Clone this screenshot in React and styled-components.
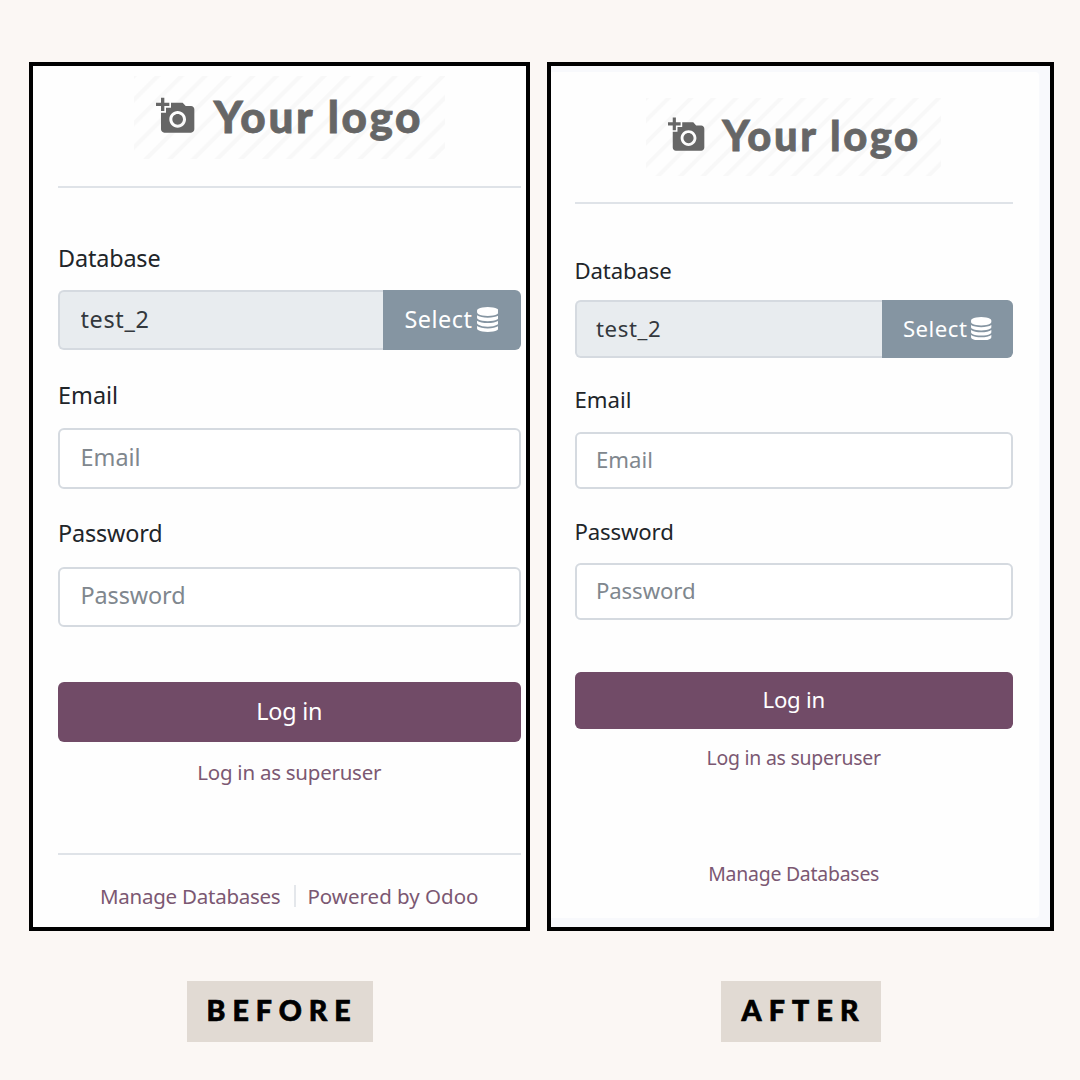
import React from "react";
import styled, { createGlobalStyle, css } from "styled-components";
import { MdAddAPhoto } from "react-icons/md";

const GlobalStyle = createGlobalStyle`
  * { box-sizing: border-box; }
  body { margin: 0; background: #fbf7f4; }
`;

/* every length in a login form is a multiple of the form's own unit */
const u = (n) => `calc(var(--u) * ${n})`;

const Board = styled.main`
  width: 1080px;
  height: 1080px;
  padding: 62px 26px 0 29px;
  display: flex;
  gap: 17px;
  align-items: flex-start;
  background: #fbf7f4;
  font-family: "Noto Sans", "Open Sans", sans-serif;
  overflow: hidden;
`;

const Figure = styled.figure`
  margin: 0;
  width: ${(p) => p.$width}px;
  display: flex;
  flex-direction: column;
  align-items: center;
`;

const Frame = styled.div`
  width: 100%;
  height: 869px;
  border: 4px solid #000;
  background: ${(p) => (p.$tinted ? "#f8f9fc" : "#fefefe")};
  padding: ${(p) => (p.$tinted ? "6px 11px 9px 0" : "0")};
`;

const Caption = styled.figcaption`
  margin-top: 50px;
  width: ${(p) => p.$width}px;
  height: 61px;
  padding-left: ${(p) => p.$inset}px;
  background: #e1dad3;
  color: #000;
  font: 900 28.5px/59px Lato, sans-serif;
  letter-spacing: ${(p) => p.$tracking}px;
  -webkit-text-stroke: 0.7px #000;
  white-space: nowrap;
`;

const Card = styled.div`
  --u: ${(p) => p.$unit}px;
  height: 100%;
  background: #fefefe;
  border-radius: 0 4px 4px 0;
  padding: ${(p) => p.$padding};
`;

const Form = styled.form`
  width: ${u(462.5)};
  display: flex;
  flex-direction: column;
`;

const Logo = styled.div`
  align-self: center;
  width: ${u(311)};
  height: ${u(83)};
  padding: 0 0 0 ${u(22.5)};
  display: flex;
  align-items: center;
  color: #666;
  background: repeating-linear-gradient(
    135deg,
    #f8f8f8 0,
    #f8f8f8 ${u(1.4)},
    #fefefe ${u(2.8)},
    #fefefe ${u(14)},
    #f8f8f8 ${u(15.4)},
    #f8f8f8 ${u(16.8)}
  );
  svg {
    width: ${u(40)};
    height: ${u(40)};
    flex: none;
    margin-bottom: ${u(3.5)};
  }
`;

const LogoText = styled.span`
  margin: 0 0 ${u(4)} ${u(17.5)};
  font: 900 ${u(44)} / ${u(60)} Lato, sans-serif;
  white-space: nowrap;
  letter-spacing: ${u(2.7)};
  -webkit-text-stroke: ${u(0.8)} #666;
`;

const Rule = styled.hr`
  width: 100%;
  height: 2px;
  margin: ${(p) => u(p.$top)} 0 0;
  border: 0;
  background: #dfe3e8;
`;

const Field = styled.div`
  margin-top: ${(p) => u(p.$top)};
  display: flex;
  flex-direction: column;
  gap: ${(p) => u(p.$gap)};
`;

const Label = styled.label`
  color: #212529;
  font-size: ${u(23.4)};
  line-height: ${u(30)};
  letter-spacing: ${(p) => u(p.$tracking || 0)};
`;

const Group = styled.div`
  display: flex;
  height: ${u(60.3)};
`;

const boxText = css`
  font-family: inherit;
  font-size: ${u(23.4)};
  letter-spacing: ${(p) => u(p.$tracking || 0)};
`;

const Input = styled.input`
  ${boxText}
  flex: 1;
  min-width: 0;
  height: ${u(60.3)};
  padding: 0 ${u(20.5)} ${u(3)};
  border: 2px solid #d5dae0;
  border-radius: ${(p) => (p.$joined ? `${u(6)} 0 0 ${u(6)}` : u(6))};
  border-right-width: ${(p) => (p.$joined ? 0 : 2)}px;
  background: ${(p) => (p.$joined ? "#e8ecef" : "#fff")};
  color: #33383d;
  outline: none;
  &::placeholder { color: #80878e; opacity: 1; }
`;

const SelectButton = styled.button`
  ${boxText}
  width: ${u(138)};
  padding: 0 0 ${u(3)} ${u(22)};
  border: 0;
  border-radius: 0 ${u(6)} ${u(6)} 0;
  background: #8595a2;
  color: #fff;
  display: flex;
  align-items: center;
  svg {
    width: ${u(21.5)};
    height: ${u(25)};
    margin: ${u(2)} 0 0 auto;
    margin-right: ${u(22.5)};
  }
`;

const Submit = styled.button`
  ${boxText}
  margin-top: ${u(55.3)};
  height: ${u(60.3)};
  padding: 0 0 ${u(3)};
  border: 0;
  border-radius: ${u(6)};
  background: #714b67;
  color: #fff;
`;

const Link = styled.a`
  color: #7b5872;
  font-size: ${u(20.5)};
  line-height: ${u(30)};
  letter-spacing: ${(p) => u(p.$tracking || 0)};
  white-space: nowrap;
`;

const Centered = styled.div`
  margin-top: ${(p) => u(p.$top)};
  display: flex;
  justify-content: center;
  align-items: center;
`;

const Divider = styled.span`
  width: 2px;
  height: ${u(22)};
  margin: 0 ${u(11)} 0 ${u(14)};
  background: #e4e7eb;
`;

const DatabaseIcon = () => (
  <svg viewBox="0 0 1536 1792" fill="currentColor" aria-hidden="true">
    <path d="M768 768q237 0 443-43t325-127v170q0 69-103 128t-280 93.500-385 34.500-385-34.500-280-93.500-103-128v-170q119 84 325 127t443 43zM768 1536q237 0 443-43t325-127v170q0 69-103 128t-280 93.500-385 34.500-385-34.500-280-93.500-103-128v-170q119 84 325 127t443 43zM768 1152q237 0 443-43t325-127v170q0 69-103 128t-280 93.500-385 34.500-385-34.500-280-93.500-103-128v-170q119 84 325 127t443 43zM768 0q208 0 385 34.500t280 93.500 103 128v128q0 69-103 128t-280 93.500-385 34.500-385-34.500-280-93.500-103-128v-128q0-69 103-128t280-93.500 385-34.500z" />
  </svg>
);

function LoginForm({ branded }) {
  return (
    <Form>
      <Logo>
        <MdAddAPhoto />
        <LogoText>Your logo</LogoText>
      </Logo>
      <Rule $top={27.4} />
      <Field $top={54.8} $gap={16.8}>
        <Label $tracking={-0.15}>Database</Label>
        <Group>
          <Input $joined $tracking={0.65} readOnly value="test_2" />
          <SelectButton $tracking={0.5} type="button">
            Select
            <DatabaseIcon />
          </SelectButton>
        </Group>
      </Field>
      <Field $top={29.4} $gap={18.6}>
        <Label>Email</Label>
        <Group>
          <Input placeholder="Email" />
        </Group>
      </Field>
      <Field $top={29.4} $gap={18.6}>
        <Label $tracking={-0.15}>Password</Label>
        <Group>
          <Input $tracking={-0.1} placeholder="Password" />
        </Group>
      </Field>
      <Submit $tracking={-0.25} type="button">Log in</Submit>
      <Centered $top={15}>
        <Link $tracking={-0.25}>Log in as superuser</Link>
      </Centered>
      {branded && <Rule $top={65.2} />}
      <Centered $top={branded ? 26.3 : 92.8}>
        <Link $tracking={-0.25}>Manage Databases</Link>
        {branded && (
          <>
            <Divider />
            <Link>Powered by Odoo</Link>
          </>
        )}
      </Centered>
    </Form>
  );
}

export default function App() {
  return (
    <>
      <GlobalStyle />
      <Board>
        <Figure $width={501}>
          <Frame>
            <Card $unit={1} $padding="10px 0 0 25px">
              <LoginForm branded />
            </Card>
          </Frame>
          <Caption $width={186} $inset={20} $tracking={7}>BEFORE</Caption>
        </Figure>
        <Figure $width={507}>
          <Frame $tinted>
            <Card $unit={0.948} $padding="25.5px 0 0 23.5px">
              <LoginForm />
            </Card>
          </Frame>
          <Caption $width={160} $inset={21} $tracking={7.2}>AFTER</Caption>
        </Figure>
      </Board>
    </>
  );
}
